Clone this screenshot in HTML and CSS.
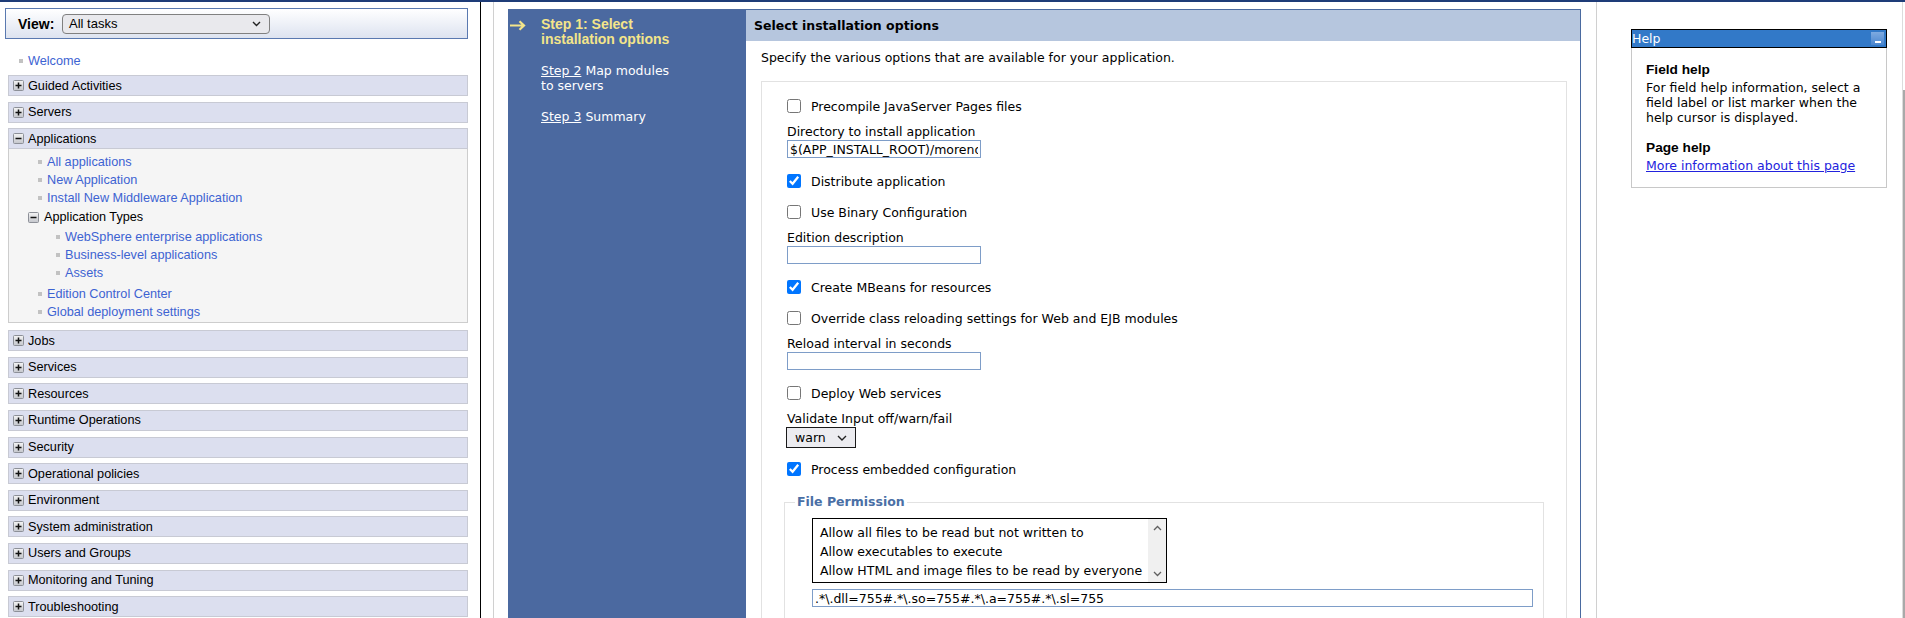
FILE: index.html
```html
<!DOCTYPE html>
<html lang="en">
<head>
<meta charset="utf-8">
<title>Install New Application</title>
<link rel="stylesheet" href="styles.css">
</head>
<body>
<svg class="defs" aria-hidden="true">
  <defs>
    <linearGradient id="tg" x1="0" y1="0" x2="0" y2="1">
      <stop offset="0" stop-color="#f4f4f4"/>
      <stop offset="1" stop-color="#c4c6cc"/>
    </linearGradient>
    <symbol id="plus" viewBox="0 0 11 11">
      <rect x="0.5" y="0.5" width="10" height="10" rx="1" fill="url(#tg)" stroke="#8d9098"/>
      <path d="M2.5 5.5H8.5M5.5 2.5V8.5" stroke="#111" stroke-width="1.5"/>
    </symbol>
    <symbol id="minus" viewBox="0 0 11 11">
      <rect x="0.5" y="0.5" width="10" height="10" rx="1" fill="url(#tg)" stroke="#8d9098"/>
      <path d="M2.5 5.5H8.5" stroke="#111" stroke-width="1.5"/>
    </symbol>
  </defs>
</svg>
<div class="topbar"></div>
<div class="frames">
  <aside class="nav">
    <div class="viewbox">
      <span class="view-label">View:</span>
      <div class="view-select"><span>All tasks</span><svg width="9" height="6" viewBox="0 0 9 6"><path d="M1 1L4.5 4.5L8 1" fill="none" stroke="#222" stroke-width="1.4"/></svg></div>
    </div>
    <div class="welcome"><span class="bullet"></span><a class="link" href="#">Welcome</a></div>
    <div class="rows">
      <div class="row"><svg class="icon"><use href="#plus"/></svg>Guided Activities</div>
      <div class="row"><svg class="icon"><use href="#plus"/></svg>Servers</div>
      <div class="row open"><svg class="icon"><use href="#minus"/></svg>Applications</div>
      <div class="panel">
        <div class="item"><span class="bullet"></span><a class="link" href="#">All applications</a></div>
        <div class="item"><span class="bullet"></span><a class="link" href="#">New Application</a></div>
        <div class="item"><span class="bullet"></span><a class="link" href="#">Install New Middleware Application</a></div>
        <div class="types"><svg class="icon"><use href="#minus"/></svg>Application Types</div>
        <div class="item sub"><span class="bullet"></span><a class="link" href="#">WebSphere enterprise applications</a></div>
        <div class="item sub"><span class="bullet"></span><a class="link" href="#">Business-level applications</a></div>
        <div class="item sub"><span class="bullet"></span><a class="link" href="#">Assets</a></div>
        <div class="item gap"><span class="bullet"></span><a class="link" href="#">Edition Control Center</a></div>
        <div class="item"><span class="bullet"></span><a class="link" href="#">Global deployment settings</a></div>
      </div>
      <div class="row"><svg class="icon"><use href="#plus"/></svg>Jobs</div>
      <div class="row"><svg class="icon"><use href="#plus"/></svg>Services</div>
      <div class="row"><svg class="icon"><use href="#plus"/></svg>Resources</div>
      <div class="row"><svg class="icon"><use href="#plus"/></svg>Runtime Operations</div>
      <div class="row"><svg class="icon"><use href="#plus"/></svg>Security</div>
      <div class="row"><svg class="icon"><use href="#plus"/></svg>Operational policies</div>
      <div class="row"><svg class="icon"><use href="#plus"/></svg>Environment</div>
      <div class="row"><svg class="icon"><use href="#plus"/></svg>System administration</div>
      <div class="row"><svg class="icon"><use href="#plus"/></svg>Users and Groups</div>
      <div class="row"><svg class="icon"><use href="#plus"/></svg>Monitoring and Tuning</div>
      <div class="row"><svg class="icon"><use href="#plus"/></svg>Troubleshooting</div>
    </div>
  </aside>

  <main class="main">
    <div class="wrap">
      <div class="wizard">
        <div class="steps">
          <div class="step current">
            <span class="arrow"><svg width="17" height="11" viewBox="0 0 17 11"><path d="M1 5.5H15M10.5 1.3L15 5.5L10.5 9.7" fill="none" stroke="#f4e58a" stroke-width="2.2"/></svg></span>
            <span class="text">Step 1: Select installation options</span>
          </div>
          <div class="step">
            <span></span>
            <span class="text"><a href="#">Step 2</a> <span>Map modules</span><br><span>to servers</span></span>
          </div>
          <div class="step">
            <span></span>
            <span class="text"><a href="#">Step 3</a> <span>Summary</span></span>
          </div>
        </div>
        <section class="pane">
          <div class="pane-head">Select installation options</div>
          <p class="intro">Specify the various options that are available for your application.</p>
          <div class="box">
            <label class="opt"><input type="checkbox"><span>Precompile JavaServer Pages files</span></label>
            <div class="lbl">Directory to install application</div>
            <input class="txt" type="text" value="$(APP_INSTALL_ROOT)/morenode01Cell">
            <label class="opt"><input type="checkbox" checked><span>Distribute application</span></label>
            <label class="opt"><input type="checkbox"><span>Use Binary Configuration</span></label>
            <div class="lbl">Edition description</div>
            <input class="txt" type="text" value="">
            <label class="opt"><input type="checkbox" checked><span>Create MBeans for resources</span></label>
            <label class="opt"><input type="checkbox"><span>Override class reloading settings for Web and EJB modules</span></label>
            <div class="lbl">Reload interval in seconds</div>
            <input class="txt" type="text" value="">
            <label class="opt"><input type="checkbox"><span>Deploy Web services</span></label>
            <div class="lbl">Validate Input off/warn/fail</div>
            <div class="sel"><span>warn</span><svg width="10" height="6" viewBox="0 0 10 6"><path d="M1 1L5 5L9 1" fill="none" stroke="#222" stroke-width="1.4"/></svg></div>
            <label class="opt"><input type="checkbox" checked><span>Process embedded configuration</span></label>
            <fieldset class="perm">
              <legend>File Permission</legend>
              <div class="list">
                <div class="list-items">
                  <div>Allow all files to be read but not written to</div>
                  <div>Allow executables to execute</div>
                  <div>Allow HTML and image files to be read by everyone</div>
                </div>
                <div class="list-bar">
                  <svg width="9" height="6" viewBox="0 0 9 6"><path d="M1 5L4.5 1.5L8 5" fill="none" stroke="#606060" stroke-width="1.3"/></svg>
                  <svg width="9" height="6" viewBox="0 0 9 6"><path d="M1 1L4.5 4.5L8 1" fill="none" stroke="#606060" stroke-width="1.3"/></svg>
                </div>
              </div>
              <input class="txt" type="text" value=".*\.dll=755#.*\.so=755#.*\.a=755#.*\.sl=755">
            </fieldset>
          </div>
        </section>
      </div>
    </div>
  </main>

  <div class="helpcol">
    <div class="help">
      <div class="help-head">
        <span>Help</span>
        <span class="help-min"><span class="help-dash"></span></span>
      </div>
      <div class="help-body">
        <h4>Field help</h4>
        <p>For field help information, select a field label or list marker when the help cursor is displayed.</p>
        <h4 class="second">Page help</h4>
        <p><a class="help-link" href="#">More information about this page</a></p>
      </div>
    </div>
  </div>
  <div class="sbar"><div class="sbar-thumb"></div></div>
</div>
</body>
</html>
```

FILE: styles.css
```css
* { box-sizing: border-box; }
html, body { margin: 0; padding: 0; }
body {
  width: 1905px;
  height: 618px;
  overflow: hidden;
  background: #fff;
  color: #000;
  font-family: "DejaVu Sans", Verdana, sans-serif;
  font-size: 12.5px;
}
.defs { display: block; width: 0; height: 0; overflow: hidden; }
.topbar { height: 2px; background: #1e3c78; }
.frames { display: flex; height: 616px; overflow: hidden; }

/* ---------- navigation ---------- */
.nav {
  flex: none;
  width: 481px;
  border-right: 1px solid #000;
  padding: 6px 12px 0 8px;
  font-family: "Liberation Sans", Arial, sans-serif;
  font-size: 12.7px;
}
.viewbox {
  margin-left: -3px;
  height: 31px;
  border: 1px solid #5a79b0;
  background: linear-gradient(#ffffff, #dde3f0);
  display: flex;
  align-items: center;
  padding-left: 12px;
}
.view-label { width: 44px; font-weight: bold; font-size: 14px; }
.view-select {
  width: 208px;
  height: 20px;
  border: 1px solid #808080;
  border-radius: 4px;
  background: #e9e9ed;
  display: flex;
  align-items: center;
  justify-content: space-between;
  padding: 0 8px 0 6px;
  font-size: 13px;
}
.welcome { margin-top: 14px; height: 16px; display: flex; align-items: center; padding-left: 11px; }
.bullet { flex: none; width: 4px; height: 4px; background: #c2c2c2; margin-right: 5px; }
.link { color: #3d63d2; text-decoration: none; }
.rows { margin-top: 6px; }
.row {
  height: 21px;
  border: 1px solid #c8cad4;
  background: #dcdfef;
  display: flex;
  align-items: center;
  padding-left: 4px;
  margin-bottom: 5.6px;
}
.row.open { margin-bottom: 0; }
.icon { flex: none; width: 11px; height: 11px; margin-right: 4px; }
.panel {
  border: 1px solid #cdcdcd;
  border-top: none;
  background: #f5f5f5;
  padding: 4px 0 1px;
  margin-bottom: 7px;
}
.item { height: 18px; display: flex; align-items: center; padding-left: 29px; }
.item.sub { padding-left: 47px; }
.types { height: 20px; display: flex; align-items: center; padding-left: 19px; }
.types .icon { margin-right: 5px; }
.types + .item { margin-top: 1px; }
.item.gap { margin-top: 3px; }

/* ---------- wizard ---------- */
.main { flex: none; width: 1116px; padding-left: 12px; display: flex; }
.wrap {
  flex: 1;
  display: flex;
  flex-direction: column;
  border-left: 1px solid #d0d0d0;
  border-right: 1px solid #d0d0d0;
  padding: 7px 15px 0 14px;
}
.wizard { flex: 1; display: flex; }
.steps { flex: none; width: 238px; background: #4b69a0; color: #fff; padding-top: 8px; }
.step { display: grid; grid-template-columns: 33px 140px; line-height: 15px; }
.step + .step { margin-top: 16px; }
.step .arrow svg { display: block; margin: 3px 0 0 1px; }
.step.current .text {
  color: #f4e58a;
  font-family: "Liberation Sans", Arial, sans-serif;
  font-weight: bold;
  font-size: 14px;
}
.step a { color: #fff; }
.pane { flex: 1; border-top: 1px solid #4a6aa0; border-right: 1px solid #4a6aa0; }
.pane-head {
  height: 31px;
  line-height: 31px;
  background: #b6c6de;
  font-weight: bold;
  padding-left: 8px;
}
.intro { margin: 9px 0 0 15px; line-height: 16px; }
.box { margin: 15px 13px 0 15px; border: 1px solid #e2e2e2; padding: 14px 22px 60px; }
.opt { height: 20px; display: flex; align-items: center; padding-left: 3px; }
.opt input { flex: none; width: 14px; height: 14px; margin: 0 10px 0 0; }
.lbl { height: 16px; line-height: 16px; padding-left: 3px; }
.txt {
  display: block;
  margin-left: 3px;
  width: 194px;
  height: 18px;
  border: 1px solid #7e9dc8;
  padding: 0 2px;
  font: 12.5px "DejaVu Sans", Verdana, sans-serif;
  color: #000;
  background: #fff;
  outline: none;
}
.opt + .opt { margin-top: 11px; }
.opt + .lbl { margin-top: 8px; }
.txt + .opt { margin-top: 13px; }
.sel + .opt { margin-top: 11px; }
.sel {
  margin-left: 2px;
  width: 70px;
  height: 21px;
  border: 1px solid #1a1a1a;
  background: #ececf0;
  display: flex;
  align-items: center;
  justify-content: space-between;
  padding: 0 8px;
}
.perm { margin: 15px 0 0; border: 1px solid #e2e2e2; padding: 0 10px 30px; min-width: 0; }
.perm legend { padding: 0 2px; line-height: 16px; font-weight: bold; color: #4a6fa5; }
.list { margin: 8px 0 0 17px; width: 355px; height: 65px; border: 1px solid #000; display: flex; }
.list-items { flex: 1; padding: 4px 0 0 7px; line-height: 19px; white-space: nowrap; overflow: hidden; }
.list-bar {
  flex: none;
  width: 18px;
  background: #f0f0f0;
  display: flex;
  flex-direction: column;
  justify-content: space-between;
  align-items: center;
  padding: 6px 0 5px;
}
.perm .txt { margin: 6px 0 0 17px; width: 721px; }

/* ---------- help ---------- */
.helpcol { flex: none; width: 305px; padding: 27px 0 0 34px; }
.help { width: 256px; }
.help-head {
  height: 19px;
  border: 1px solid #000;
  background: #3279c8;
  color: #fff;
  display: flex;
  align-items: center;
  justify-content: space-between;
  padding: 0 2px 0 0;
}
.help-min {
  width: 13px;
  height: 13px;
  background: linear-gradient(#7eaae0, #4a86cf);
  display: flex;
  align-items: flex-end;
  justify-content: center;
  padding-bottom: 2px;
}
.help-dash { width: 6px; height: 2px; background: #fff; }
.help-body { border: 1px solid #c8c8c8; border-top: none; padding: 14px; line-height: 15px; }
.help-body h4 { margin: 0; font: bold 13.7px/15px "Liberation Sans", Arial, sans-serif; }
.help-body p { margin: 3px 0 0; }
.help-body h4.second { margin-top: 15px; }
.help-link { color: #2222dd; text-decoration: underline; }

.sbar { flex: none; width: 3px; border-left: 1px solid #dcdcdc; }
.sbar-thumb { margin-top: 88px; height: 600px; background: #a9a9a9; }
```
